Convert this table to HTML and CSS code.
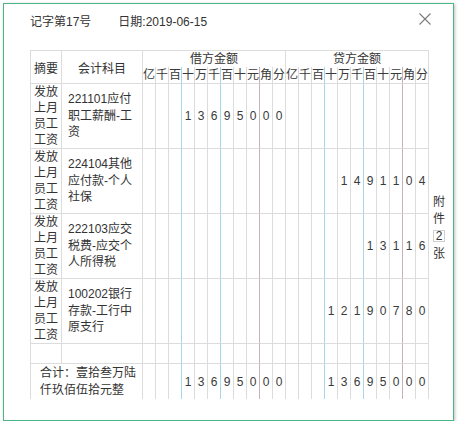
FILE: index.html
```html
<!DOCTYPE html>
<html lang="zh">
<head>
<meta charset="utf-8">
<link rel="stylesheet" href="styles.css">
</head>
<body>
<div class="dialog">
  <div class="title"><span>记字第17号</span><span class="date">日期:2019-06-15</span></div>
  <svg class="close" width="12" height="12" viewBox="0 0 12 12"><path d="M0.5 0.5L11.5 11.5M11.5 0.5L0.5 11.5" stroke="#7a7a7a" stroke-width="1.1" fill="none"/></svg>
  <div class="content">
    <div class="grid">
      <div class="cell zy hd">摘要</div>
      <div class="cell km hd">会计科目</div>
      <div class="cell side debit">借方金额</div>
      <div class="cell side credit">贷方金额</div>
      <div class="row hrow"><span>亿</span><span>千</span><span>百</span><span>十</span><span>万</span><span>千</span><span>百</span><span>十</span><span>元</span><span>角</span><span>分</span><span>亿</span><span>千</span><span>百</span><span>十</span><span>万</span><span>千</span><span>百</span><span>十</span><span>元</span><span>角</span><span>分</span></div>

      <div class="row"><div class="cell zy">发放上月员工工资</div><div class="cell km">221101应付职工薪酬-工资</div><span></span><span></span><span></span><span>1</span><span>3</span><span>6</span><span>9</span><span>5</span><span>0</span><span>0</span><span>0</span><span></span><span></span><span></span><span></span><span></span><span></span><span></span><span></span><span></span><span></span><span></span></div>

      <div class="row"><div class="cell zy">发放上月员工工资</div><div class="cell km">224104其他应付款-个人社保</div><span></span><span></span><span></span><span></span><span></span><span></span><span></span><span></span><span></span><span></span><span></span><span></span><span></span><span></span><span></span><span>1</span><span>4</span><span>9</span><span>1</span><span>1</span><span>0</span><span>4</span></div>

      <div class="row"><div class="cell zy">发放上月员工工资</div><div class="cell km">222103应交税费-应交个人所得税</div><span></span><span></span><span></span><span></span><span></span><span></span><span></span><span></span><span></span><span></span><span></span><span></span><span></span><span></span><span></span><span></span><span></span><span>1</span><span>3</span><span>1</span><span>1</span><span>6</span></div>

      <div class="row"><div class="cell zy">发放上月员工工资</div><div class="cell km">100202银行存款-工行中原支行</div><span></span><span></span><span></span><span></span><span></span><span></span><span></span><span></span><span></span><span></span><span></span><span></span><span></span><span></span><span>1</span><span>2</span><span>1</span><span>9</span><span>0</span><span>7</span><span>8</span><span>0</span></div>

      <div class="row"><div class="cell zy"></div><div class="cell km"></div><span></span><span></span><span></span><span></span><span></span><span></span><span></span><span></span><span></span><span></span><span></span><span></span><span></span><span></span><span></span><span></span><span></span><span></span><span></span><span></span><span></span><span></span></div>

      <div class="row total"><div class="cell sum">合计：壹拾叁万陆仟玖佰伍拾元整</div><span></span><span></span><span></span><span>1</span><span>3</span><span>6</span><span>9</span><span>5</span><span>0</span><span>0</span><span>0</span><span></span><span></span><span></span><span>1</span><span>3</span><span>6</span><span>9</span><span>5</span><span>0</span><span>0</span><span>0</span></div>
    </div>
    <div class="fj">
      <span>附</span><span>件</span><span class="num">2</span><span>张</span>
    </div>
  </div>
</div>
</body>
</html>
```

FILE: styles.css
```css
html, body {
  margin: 0;
  padding: 0;
  background: #ffffff;
}
body {
  font-family: "Liberation Sans", "Noto Sans CJK SC", sans-serif;
  font-size: 12px;
  color: #333333;
}
.dialog {
  position: relative;
  box-sizing: border-box;
  margin: 3px 0 0 3px;
  width: 451px;
  height: 418px;
  border: 1px solid #4cb585;
  box-shadow: 1px 1px 3px rgba(0, 0, 0, 0.25);
  background: #fff;
  padding: 10px 0 0 26px;
}
.title {
  display: flex;
  gap: 27px;
  line-height: 16px;
  height: 16px;
}
.close {
  position: absolute;
  top: 9px;
  right: 22px;
}
.content {
  display: flex;
  margin-top: 20px;
}
.grid {
  display: grid;
  grid-template-columns: 31px 81px repeat(22, 13px);
  grid-template-rows: 16px 17px 65px 65px 65px 65px 20px 35px;
  border-top: 1px solid #dcdcdc;
  border-left: 1px solid #dcdcdc;
}
.row {
  display: contents;
}
.cell, .row > span {
  box-sizing: border-box;
  border-right: 1px solid #dcdcdc;
  border-bottom: 1px solid #dcdcdc;
}
.row > span {
  display: flex;
  align-items: center;
  justify-content: center;
  font-size: 12px;
  color: #3a3a3a;
}
.row > span:nth-of-type(3),
.row > span:nth-of-type(6),
.row > span:nth-of-type(14),
.row > span:nth-of-type(17) {
  border-right-color: #a9d9e8;
}
.row > span:nth-of-type(9),
.row > span:nth-of-type(20) {
  border-right-color: #c7b1bb;
}
.hrow > span {
  line-height: 16px;
}
.hd.zy {
  grid-row: 1 / span 2;
  grid-column: 1;
  display: flex;
  align-items: center;
  justify-content: center;
}
.hd.km {
  grid-row: 1 / span 2;
  grid-column: 2;
  display: flex;
  align-items: center;
  justify-content: center;
}
.side {
  border-bottom: none;
  display: flex;
  align-items: center;
  justify-content: center;
  line-height: 16px;
}
.debit {
  grid-row: 1;
  grid-column: 3 / span 11;
}
.credit {
  grid-row: 1;
  grid-column: 14 / span 11;
}
.row > .zy {
  text-align: center;
  line-height: 16px;
  padding: 0;
  word-break: break-all;
  overflow: hidden;
}
.row > .km {
  display: flex;
  align-items: center;
  padding: 0 6px;
  line-height: 16.5px;
  word-break: break-all;
}
.total > span {
  border-bottom: none;
}
.sum {
  grid-column: span 2;
  border-bottom: none;
  display: flex;
  align-items: center;
  padding: 0 3px 0 9px;
  line-height: 17px;
}
.fj {
  width: 20px;
  display: flex;
  flex-direction: column;
  align-items: center;
  justify-content: center;
  padding-top: 8px;
  line-height: 17px;
}
.fj .num {
  box-sizing: border-box;
  width: 12px;
  height: 12px;
  border: 1px solid #cfcfcf;
  line-height: 10px;
  text-align: center;
  font-size: 12px;
  margin: 2px 0 4px;
}
```
